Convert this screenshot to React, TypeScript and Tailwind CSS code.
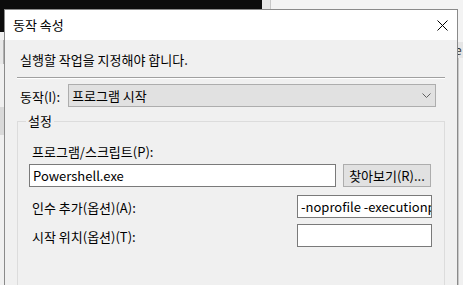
import React from "react";

const FONT = "font-['Noto_Sans_CJK_KR',_'Liberation_Sans',_sans-serif]";

function CloseIcon() {
  return (
    <svg width="11" height="11" viewBox="0 0 11 11" className="block">
      <path d="M0.5 0.5 L10.5 10.5 M10.5 0.5 L0.5 10.5" stroke="#000" strokeWidth="1" fill="none" />
    </svg>
  );
}

function Chevron() {
  return (
    <svg width="9" height="5" viewBox="0 0 9 5" className="block">
      <path d="M0.5 0.5 L4.5 4.5 L8.5 0.5" stroke="#606060" strokeWidth="1" fill="none" />
    </svg>
  );
}

function TextBox({ value, className }: { value?: string; className: string }) {
  return (
    <div className={`h-[23px] bg-white border border-[#7a7a7a] flex items-center overflow-hidden whitespace-nowrap px-[3px] text-[13px] leading-[16px] text-black ${className}`}>
      {value}
    </div>
  );
}

export default function App() {
  return (
    <div className={`relative w-[463px] h-[285px] overflow-hidden bg-[#f0f0f0] ${FONT}`}>
      {/* desktop behind the dialog */}
      <div className="flex h-[9px]">
        <div className="w-[262px] bg-[#0c0c0c]" />
        <div className="w-[9px] bg-[#e6e6e6] border-r border-[#c8c8c8]" />
        <div className="flex-1 bg-[#f3f3f3]" />
      </div>
      <div className="flex">
        <div className="w-[4px] flex flex-col">
          <div className="h-[23px] bg-[#0c0c0c]" />
          <div className="h-[8px] bg-[#f0f0f0]" />
          <div className="h-[24px] bg-[#e8e8e8] border-r border-[#b0b0b0]" />
          <div className="h-[43px] bg-[#f0f0f0]" />
          <div className="h-[28px] bg-[#d9d9d9]" />
          <div className="h-[150px] bg-[#f0f0f0]" />
        </div>
        <div className="flex-1" />
        <div className="w-[5px] flex flex-col">
          <div className="h-[33px] bg-[#f3f3f3]" />
          <div className="h-[16px] bg-[#e5e5e5] overflow-hidden text-[12px] leading-[16px] text-[#333]">
            <span className="block -ml-[3px]">e</span>
          </div>
          <div className="flex-1 h-[240px] border-l border-[#c8c8c8] bg-[#f0f0f0]" />
        </div>
      </div>

      {/* dialog window */}
      <div className="absolute left-[4px] top-[9px] w-[454px] h-[290px] border border-[#8a8a8a] flex flex-col text-black">
        <div className="h-[30px] bg-white flex items-center justify-between pl-[8px] pr-[9px] shrink-0">
          <span className="text-[13px] leading-[16px]">동작 속성</span>
          <CloseIcon />
        </div>
        <div className="flex-1 bg-[#f0f0f0] px-[12px] flex flex-col text-[13px]">
          <div className="mt-[12px] pl-[3px] h-[16px] leading-[16px]">실행할 작업을 지정해야 합니다.</div>
          <div className="mt-[9px] h-[2px] border-t border-[#a0a0a0] border-b border-b-white" />
          <div className="mt-[5px] h-[23px] flex items-center">
            <div className="w-[51px] pl-[3px] leading-[16px] pt-[2px] whitespace-nowrap">동작(I):</div>
            <div className="w-[368px] h-[23px] bg-[#e1e1e1] border border-[#adadad] flex items-center justify-between pl-[3px] pr-[4px]">
              <span className="leading-[16px]">프로그램 시작</span>
              <Chevron />
            </div>
          </div>

          <div className="relative mt-[14px] flex-1 border border-[#dcdcdc] border-b-0 flex flex-col">
            <span className="absolute -top-[9px] left-[8px] px-[2px] bg-[#f0f0f0] leading-[16px]">설정</span>
            <div className="mt-[22px] pl-[14px] h-[16px] leading-[16px]">프로그램/스크립트(P):</div>
            <div className="mt-[4px] pl-[11px] flex items-center gap-[7px]">
              <TextBox value="Powershell.exe" className="w-[307px]" />
              <div className="w-[88px] h-[23px] bg-[#e1e1e1] border border-[#adadad] flex items-center justify-center leading-[16px] whitespace-nowrap">
                찾아보기(R)...
              </div>
            </div>
            <div className="mt-[8px] flex items-center">
              <div className="w-[279px] pl-[14px] pt-[3px] leading-[16px]">인수 추가(옵션)(A):</div>
              <TextBox value="-noprofile -executionpolicy bypass" className="w-[135px]" />
            </div>
            <div className="mt-[6px] flex items-center">
              <div className="w-[279px] pl-[14px] pt-[3px] leading-[16px]">시작 위치(옵션)(T):</div>
              <TextBox className="w-[135px]" />
            </div>
          </div>
        </div>
      </div>
    </div>
  );
}
